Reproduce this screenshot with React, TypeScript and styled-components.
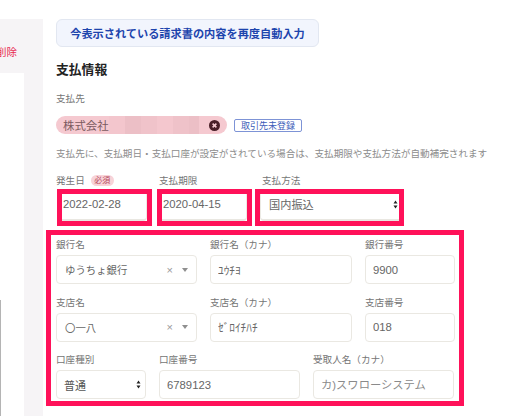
import React from "react";
import styled, { createGlobalStyle } from "styled-components";

const FONT = `"Liberation Sans", "Noto Sans CJK JP", sans-serif`;
const MARK = "#ff1159";

const GlobalStyle = createGlobalStyle`
  html, body {
    margin: 0;
    height: 100%;
    background: #fff;
    overflow: hidden;
  }
  body {
    font-family: ${FONT};
    color: #666;
  }
  * {
    box-sizing: border-box;
  }
`;

const Page = styled.div`
  display: flex;
  width: 512px;
  height: 416px;
  overflow: hidden;
`;

const Sidebar = styled.aside`
  flex: 0 0 43px;
  min-width: 0;
  margin-top: 19px;
  background: #f6f4f6;
  display: flex;
  flex-direction: column;
  overflow: hidden;
`;

const DeleteLink = styled.div`
  height: 54px;
  padding: 26px 26px 0 0;
  display: flex;
  justify-content: flex-end;
  font-size: 10.5px;
  line-height: 14px;
  color: #e8274f;
  white-space: nowrap;
`;

const SideCard = styled.div`
  flex: 1;
  width: 24px;
  background: #fff;
  padding-top: 227px;
`;

const SideRule = styled.div`
  width: 1px;
  height: 100%;
  background: #b4b4b4;
`;

const Main = styled.main`
  flex: 1;
  min-width: 0;
  padding: 19px 0 0 13px;
  display: flex;
  flex-direction: column;
`;

const AutofillButton = styled.button`
  width: 263px;
  height: 28px;
  padding: 0;
  border: 1px solid #e2e7f1;
  border-radius: 6px;
  background: #f2f5fd;
  color: #1d44ad;
  font-family: ${FONT};
  font-size: 11.2px;
  font-weight: 700;
  white-space: nowrap;
`;

const Heading = styled.h2`
  margin: 14px 0 0;
  font-size: 12.8px;
  line-height: 18px;
  font-weight: 700;
  color: #222;
`;

const Label = styled.div<{ $indent?: number }>`
  display: flex;
  align-items: center;
  gap: 6px;
  height: 14px;
  padding-left: ${(p) => p.$indent ?? 0}px;
  font-size: 9.6px;
  color: #757575;
  white-space: nowrap;
`;

const PayeeLabel = styled(Label)`
  margin-top: 12px;
`;

const PayeeRow = styled.div`
  display: flex;
  align-items: center;
  gap: 7px;
  margin-top: 11px;
`;

const PayeeChip = styled.div`
  width: 171px;
  height: 18px;
  padding: 0 7px;
  border-radius: 9px;
  background: #f5c9d0;
  display: flex;
  align-items: center;
  font-size: 11.4px;
  color: #7c5a5f;
  white-space: nowrap;
`;

const Mosaic = styled.div`
  display: flex;
  height: 100%;
  width: 90px;
`;

const MosaicCell = styled.div<{ $w: number; $c: string }>`
  width: ${(p) => p.$w}px;
  background: ${(p) => p.$c};
`;

const ChipClear = styled.svg`
  margin-left: auto;
  flex: none;
`;

const RegisterTag = styled.div`
  width: 68px;
  height: 13px;
  border: 1px solid #7d93d6;
  border-radius: 2px;
  display: flex;
  align-items: center;
  justify-content: center;
  font-size: 9px;
  color: #3d5cb8;
  white-space: nowrap;
`;

const HelpText = styled.p`
  margin: 13px 0 0;
  font-size: 9.6px;
  line-height: 14px;
  color: #8c8c8c;
  white-space: nowrap;
`;

const RequiredBadge = styled.span`
  width: 23px;
  height: 11px;
  border-radius: 6px;
  background: #f8d3d8;
  color: #b5495c;
  font-size: 8px;
  line-height: 11px;
  text-align: center;
`;

const TermsRow = styled.div`
  display: flex;
  margin-top: 12px;
`;

const TermCell = styled.div<{ $width: number; $gap?: number }>`
  display: flex;
  flex-direction: column;
  width: ${(p) => p.$width}px;
  margin-left: ${(p) => p.$gap ?? 0}px;
`;

const MarkFrame = styled.div<{ $inset?: number }>`
  margin: 2px 0 0 ${(p) => p.$inset ?? 0}px;
  height: 37px;
  border: 5px solid ${MARK};
  background: #fff;
`;

const MarkedInput = styled.input`
  display: block;
  width: 100%;
  height: 27px;
  padding: 0 0 5px 1px;
  border: 0;
  border-right: 1px solid #eceae4;
  border-bottom: 2px solid #e9e7e1;
  border-bottom-right-radius: 4px;
  outline: 0;
  background: #fff;
  font-family: ${FONT};
  font-size: 11.3px;
  color: #666;
`;

const MarkedSelect = styled.div`
  height: 27px;
  padding: 0 1px 5px 8px;
  border-left: 1px solid #eceae4;
  border-bottom: 2px solid #e9e7e1;
  border-bottom-left-radius: 4px;
  display: flex;
  align-items: center;
  justify-content: space-between;
  font-size: 11.2px;
  color: #666;
`;

const BankBox = styled.section`
  width: 418px;
  height: 176px;
  margin: 4px 0 0 -10px;
  padding: 2px 5px 0;
  border: 5px solid ${MARK};
  display: flex;
  flex-direction: column;
  gap: 10.5px;
`;

const BankRow = styled.div<{ $columns: string }>`
  display: grid;
  grid-template-columns: ${(p) => p.$columns};
  column-gap: 13px;
`;

const BankCell = styled.div`
  display: flex;
  flex-direction: column;
  gap: 4px;
  min-width: 0;
`;

const BankInput = styled.input`
  display: block;
  width: 100%;
  height: 29px;
  padding: 0 7px;
  border: 1px solid #eae8e2;
  border-radius: 4px;
  outline: 0;
  background: #fff;
  font-family: ${FONT};
  font-size: 11.3px;
  color: #666;
  &::placeholder {
    color: #8a8a8a;
    opacity: 1;
  }
`;

const ComboBox = styled.div`
  height: 29px;
  padding: 0 8px 0 8px;
  border: 1px solid #eae8e2;
  border-radius: 4px;
  display: flex;
  align-items: center;
  font-size: 10.4px;
  color: #666;
  white-space: nowrap;
`;

const ComboClear = styled.span`
  margin-left: auto;
  font-size: 11px;
  color: #9a9a9a;
`;

const ComboCaret = styled.span`
  margin-left: 9px;
  width: 0;
  height: 0;
  border-left: 3.5px solid transparent;
  border-right: 3.5px solid transparent;
  border-top: 4px solid #8f8f8f;
`;

const NativeSelect = styled.div`
  height: 29px;
  padding: 0 4px 0 7px;
  border: 1px solid #eae8e2;
  border-radius: 4px;
  display: flex;
  align-items: center;
  justify-content: space-between;
  font-size: 11px;
  color: #555;
`;

const MOSAIC = [
  { w: 16, c: "#f3c6cd" },
  { w: 16, c: "#ecbfc6" },
  { w: 16, c: "#f0c3ca" },
  { w: 16, c: "#f4c7ce" },
  { w: 16, c: "#efc2c9" },
  { w: 10, c: "#ecbfc6" },
];

function SpinArrows() {
  return (
    <svg width="5" height="9" viewBox="0 0 5 9">
      <path d="M2.5 0.5 L4.5 3.5 H0.5 Z M2.5 8.5 L4.5 5.5 H0.5 Z" fill="#222" />
    </svg>
  );
}

function Combo({ value }: { value: string }) {
  return (
    <ComboBox>
      {value}
      <ComboClear>×</ComboClear>
      <ComboCaret />
    </ComboBox>
  );
}

export default function App() {
  return (
    <Page>
      <GlobalStyle />
      <Sidebar>
        <DeleteLink>削除</DeleteLink>
        <SideCard>
          <SideRule />
        </SideCard>
      </Sidebar>

      <Main>
        <AutofillButton>今表示されている請求書の内容を再度自動入力</AutofillButton>
        <Heading>支払情報</Heading>
        <PayeeLabel>支払先</PayeeLabel>
        <PayeeRow>
          <PayeeChip>
            株式会社
            <Mosaic>
              {MOSAIC.map((m, i) => (
                <MosaicCell key={i} $w={m.w} $c={m.c} />
              ))}
            </Mosaic>
            <ChipClear width="11" height="11" viewBox="0 0 11 11">
              <circle cx="5.5" cy="5.5" r="5.5" fill="#4a1f28" />
              <path d="M3.6 3.6 L7.4 7.4 M7.4 3.6 L3.6 7.4" stroke="#f5c9d0" strokeWidth="1.5" />
            </ChipClear>
          </PayeeChip>
          <RegisterTag>取引先未登録</RegisterTag>
        </PayeeRow>
        <HelpText>
          支払先に、支払期日・支払口座が設定がされている場合は、支払期限や支払方法が自動補完されます
        </HelpText>

        <TermsRow>
          <TermCell $width={96}>
            <Label>
              発生日
              <RequiredBadge>必須</RequiredBadge>
            </Label>
            <MarkFrame $inset={1}>
              <MarkedInput readOnly value="2022-02-28" />
            </MarkFrame>
          </TermCell>
          <TermCell $width={95} $gap={5}>
            <Label $indent={2}>支払期限</Label>
            <MarkFrame>
              <MarkedInput readOnly value="2020-04-15" />
            </MarkFrame>
          </TermCell>
          <TermCell $width={149} $gap={3}>
            <Label $indent={7}>支払方法</Label>
            <MarkFrame>
              <MarkedSelect>
                国内振込
                <SpinArrows />
              </MarkedSelect>
            </MarkFrame>
          </TermCell>
        </TermsRow>

        <BankBox>
          <BankRow $columns="141px 142px 90px">
            <BankCell>
              <Label>銀行名</Label>
              <Combo value="ゆうちょ銀行" />
            </BankCell>
            <BankCell>
              <Label>銀行名（カナ）</Label>
              <BankInput readOnly value="ﾕｳﾁﾖ" />
            </BankCell>
            <BankCell>
              <Label>銀行番号</Label>
              <BankInput readOnly value="9900" />
            </BankCell>
          </BankRow>
          <BankRow $columns="141px 142px 90px">
            <BankCell>
              <Label>支店名</Label>
              <Combo value="〇一八" />
            </BankCell>
            <BankCell>
              <Label>支店名（カナ）</Label>
              <BankInput readOnly value="ｾﾞﾛｲﾁﾊﾁ" />
            </BankCell>
            <BankCell>
              <Label>支店番号</Label>
              <BankInput readOnly value="018" />
            </BankCell>
          </BankRow>
          <BankRow $columns="90px 141px 141px">
            <BankCell>
              <Label>口座種別</Label>
              <NativeSelect>
                普通
                <SpinArrows />
              </NativeSelect>
            </BankCell>
            <BankCell>
              <Label>口座番号</Label>
              <BankInput readOnly value="6789123" />
            </BankCell>
            <BankCell>
              <Label>受取人名（カナ）</Label>
              <BankInput readOnly placeholder="カ)スワローシステム" />
            </BankCell>
          </BankRow>
        </BankBox>
      </Main>
    </Page>
  );
}
